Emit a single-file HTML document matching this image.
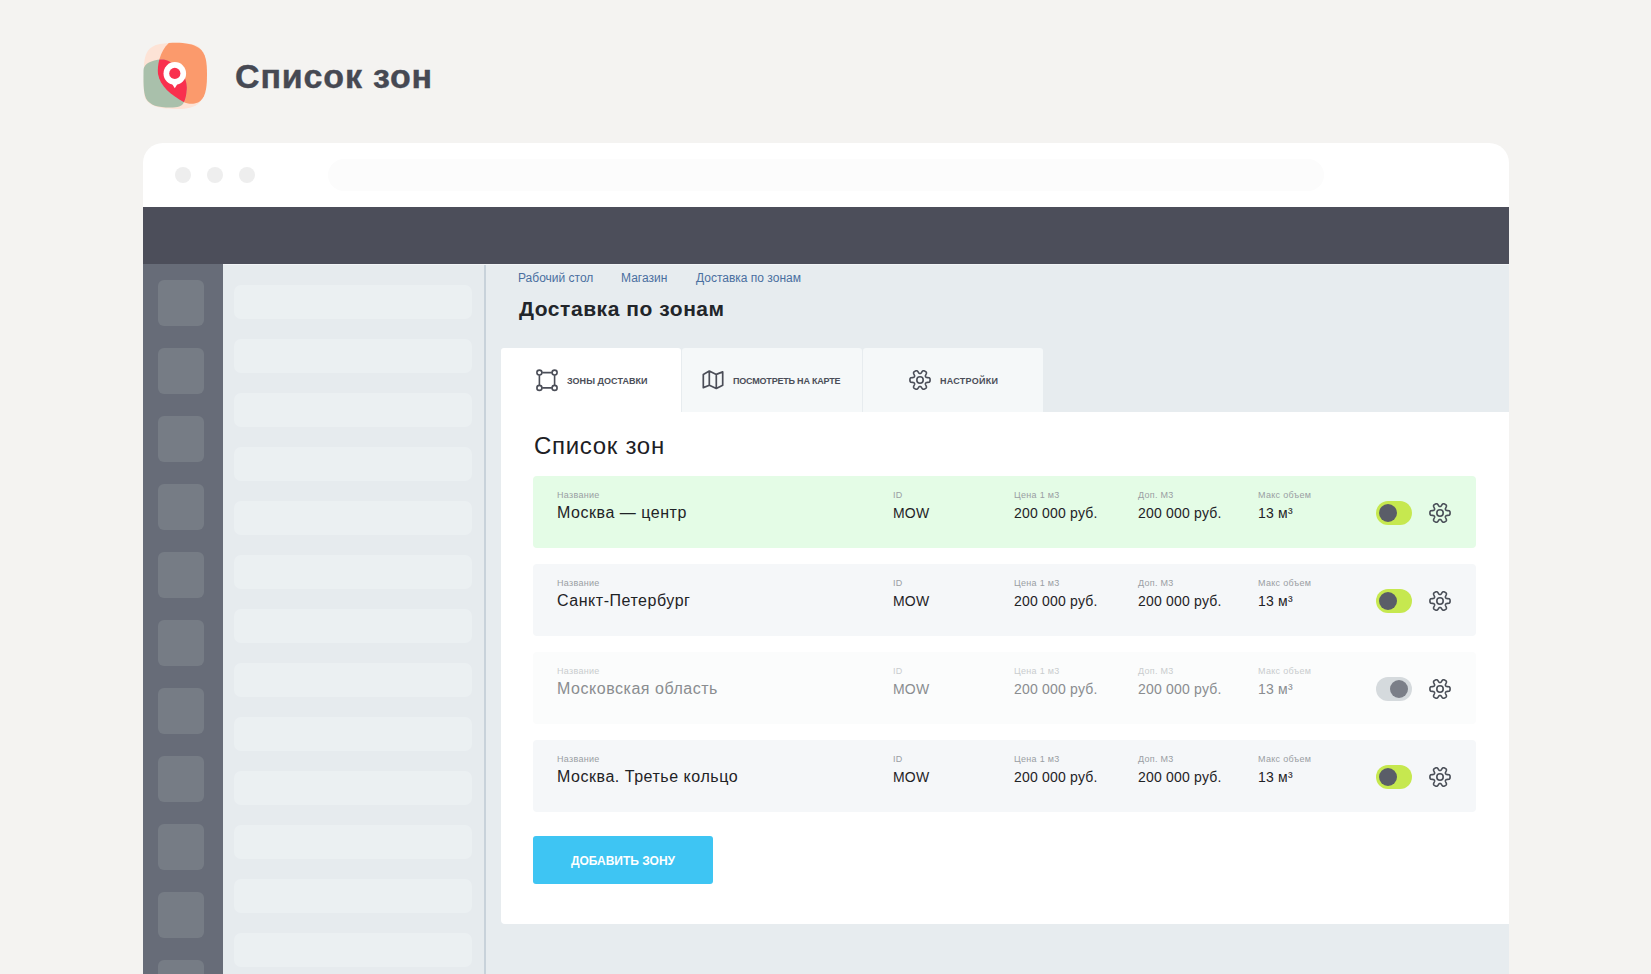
<!DOCTYPE html>
<html><head><meta charset="utf-8">
<style>
*{box-sizing:border-box;margin:0;padding:0}
html,body{width:1651px;height:974px;overflow:hidden;background:#f4f3f1;font-family:"Liberation Sans",sans-serif}
.abs{position:absolute}
#title{position:absolute;left:235px;top:57px;font-size:34px;font-weight:bold;color:#464953;white-space:nowrap;letter-spacing:0.85px;-webkit-text-stroke:0.4px #464953}
#win{position:absolute;left:143px;top:143px;width:1366px;height:900px;background:#fff;border-radius:20px 20px 0 0;overflow:hidden}
.dot{position:absolute;top:24px;width:16px;height:16px;border-radius:50%;background:#eeeeee}
#addr{position:absolute;left:185px;top:16px;width:996px;height:32px;border-radius:16px;background:#fcfcfc}
#hdr{position:absolute;left:0;top:64px;width:1366px;height:57px;background:#4c4e5a}
#side{position:absolute;left:0;top:121px;width:80px;height:800px;background:#676c78}
.sq{position:absolute;left:15px;width:46px;height:46px;border-radius:6px;background:#767c85}
#panel{position:absolute;left:80px;top:121px;width:263px;height:800px;background:#e6ebee;border-right:2px solid #c8d2da;z-index:2}
.ph{position:absolute;left:11px;width:238px;height:34px;border-radius:7px;background:#ebf0f2}
#main{position:absolute;left:342px;top:121px;width:1024px;height:800px;background:#e7ecef}
.bc{position:absolute;top:7px;font-size:12px;color:#4a6fa0;white-space:nowrap}
#h1{position:absolute;left:34px;top:33px;font-size:21px;letter-spacing:0.55px;font-weight:bold;color:#22252a;white-space:nowrap}
.tab{position:absolute;top:84px;width:180px;height:64px;background:#f5f8f9;border-radius:3px 3px 0 0}
.tab.act{background:#fff}
.tab span{position:absolute;font-size:9px;font-weight:bold;color:#4b4e58;white-space:nowrap;top:28px}
.tab svg{position:absolute}
#card{position:absolute;left:16px;top:148px;width:1008px;height:512px;background:#fff;border-radius:0 0 0 4px}
#h2{position:absolute;left:33px;top:20px;font-size:24px;letter-spacing:0.7px;color:#1d2024;white-space:nowrap}
.row{position:absolute;left:32px;width:943px;height:72px;border-radius:4px;background:#f5f7f9}
.row.g{background:#e4fce6}
.row.d{background:#fbfcfc}
.lbl{position:absolute;top:14px;font-size:9px;letter-spacing:0.3px;color:#9a9ea3;white-space:nowrap}
.val{position:absolute;top:29px;font-size:14px;letter-spacing:0.2px;color:#1f2326;white-space:nowrap}
.val.nm{font-size:16px;letter-spacing:0.53px;top:28px}
.row.d .lbl{color:#c9ccce}
.row.d .val{color:#8a8d90}
.tg{position:absolute;left:843px;top:25px;width:36px;height:24px;border-radius:12px;background:#c6e84f}
.tg i{position:absolute;left:3px;top:3px;width:18px;height:18px;border-radius:50%;background:#5a5d68}
.row.d .tg{background:#d5dadd}
.row.d .tg i{left:14px;background:#7b7f88}
.gr{position:absolute;left:895px;top:25px;width:24px;height:24px}
#btn{position:absolute;left:32px;top:424px;width:180px;height:48px;border-radius:3px;background:#3ec5f3;color:#fff;font-size:12px;font-weight:bold;text-align:center;line-height:50px}
</style></head><body>
<svg class="abs" style="left:140px;top:40px" width="72" height="72" viewBox="0 0 72 72">
  <defs><clipPath id="oc"><path id="op" d="M28.8 3 C40 2.2 52 3 59 8 C66 13 67 22 67 35 C67 50 65 59 58 62.5 C52 65 47 63.5 43.6 62 C31 55 20 46 18 34 C17 25 20 11 28.8 3Z"/></clipPath></defs>
  <path d="M4 28 C4 14 8 6 20 4 C35 2 55 2 60 8 C66 16 66 50 60 62 C55 68 45 69 40 69 C25 69 10 68 5 58 C3 50 4 40 4 28Z" fill="#fde3d6"/>
  <path d="M28.8 3 C40 2.2 52 3 59 8 C66 13 67 22 67 35 C67 50 65 59 58 62.5 C52 65 47 63.5 43.6 62 C31 55 20 46 18 34 C17 25 20 11 28.8 3Z" fill="#fb9a6c"/>
  <path id="gp" d="M3.5 31 C3.5 25 8 21.5 17.7 19.8 C23 19 26 19.6 29 21.2 C40 27 47.5 38 46.8 49 C46.4 55 45.5 59 43.8 62.5 C42 66.5 38 67.5 30 67.5 C18 67.5 10 65.5 6 58.5 C3 52 3.5 40 3.5 31Z" fill="#a9c0ab"/>
  <path d="M3.5 31 C3.5 25 8 21.5 17.7 19.8 C23 19 26 19.6 29 21.2 C40 27 47.5 38 46.8 49 C46.4 55 45.5 59 43.8 62.5 C42 66.5 38 67.5 30 67.5 C18 67.5 10 65.5 6 58.5 C3 52 3.5 40 3.5 31Z" fill="#f9304e" clip-path="url(#oc)"/>
  <circle cx="34.8" cy="33.4" r="11.3" fill="#fff"/>
  <path d="M31.5 43 L34.8 48.2 L38.1 43Z" fill="#fff"/>
  <circle cx="34.8" cy="33.4" r="5.6" fill="#f9304e"/>
</svg>
<div id="title">Список зон</div>
<div id="win">
  <div class="dot" style="left:32px"></div><div class="dot" style="left:64px"></div><div class="dot" style="left:96px"></div>
  <div id="addr"></div>
  <div id="hdr"></div>
  <div style="position:absolute;left:80px;top:121px;width:1286px;height:1px;background:#f1f4f6;z-index:3"></div>
  <div id="side">
    <div class="sq" style="top:16px"></div><div class="sq" style="top:84px"></div><div class="sq" style="top:152px"></div><div class="sq" style="top:220px"></div><div class="sq" style="top:288px"></div><div class="sq" style="top:356px"></div><div class="sq" style="top:424px"></div><div class="sq" style="top:492px"></div><div class="sq" style="top:560px"></div><div class="sq" style="top:628px"></div><div class="sq" style="top:696px"></div>
  </div>
  <div id="panel">
    <div class="ph" style="top:21px"></div><div class="ph" style="top:75px"></div><div class="ph" style="top:129px"></div><div class="ph" style="top:183px"></div><div class="ph" style="top:237px"></div><div class="ph" style="top:291px"></div><div class="ph" style="top:345px"></div><div class="ph" style="top:399px"></div><div class="ph" style="top:453px"></div><div class="ph" style="top:507px"></div><div class="ph" style="top:561px"></div><div class="ph" style="top:615px"></div><div class="ph" style="top:669px"></div>
  </div>
  <div id="main">
    <div class="bc" style="left:33px">Рабочий стол</div>
    <div class="bc" style="left:136px">Магазин</div>
    <div class="bc" style="left:211px">Доставка по зонам</div>
    <div id="h1">Доставка по зонам</div>
    <div class="tab act" style="left:16px">
      <svg style="left:33px;top:19px" width="26" height="26" viewBox="0 0 26 26" fill="none" stroke="#4b4e58" stroke-width="1.6"><path d="M8.2 5.6H17.9M8.2 20.9H17.9M5.4 8.4V18.1M20.6 8.4V18.1"/><circle cx="5.4" cy="5.6" r="2.5"/><circle cx="20.6" cy="5.6" r="2.5"/><circle cx="5.4" cy="20.9" r="2.5"/><circle cx="20.6" cy="20.9" r="2.5"/></svg>
      <span style="left:66px;letter-spacing:0.05px">ЗОНЫ ДОСТАВКИ</span>
    </div>
    <div class="tab" style="left:197px">
      <svg style="left:19px;top:21px" width="26" height="24" viewBox="0 0 26 24" fill="none" stroke="#4b4e58" stroke-width="1.7" stroke-linejoin="round" stroke-linecap="round"><path d="M2.3 5.4 L8.3 2.1 L15.3 5.4 L21.7 2.9 V16.2 L15.3 19.5 L8.4 16.3 L2.3 18.6 Z M8.3 2.1 V16.3 M15.3 5.4 V19.5"/></svg>
      <span style="left:51px;letter-spacing:-0.2px">ПОСМОТРЕТЬ НА КАРТЕ</span>
    </div>
    <div class="tab" style="left:378px">
      <svg style="left:45px;top:20px" width="24" height="24" viewBox="0 0 24 24" fill="none" stroke="#4b4e58" stroke-width="1.6"><path d="M22.10 12.00 L22.09 12.26 L22.08 12.53 L22.05 12.79 L22.00 13.05 L21.94 13.31 L21.83 13.56 L21.68 13.79 L21.45 14.01 L21.10 14.18 L20.62 14.31 L20.04 14.38 L19.46 14.42 L18.95 14.46 L18.57 14.52 L18.29 14.61 L18.09 14.71 L17.94 14.83 L17.82 14.97 L17.72 15.11 L17.63 15.25 L17.55 15.40 L17.48 15.56 L17.43 15.73 L17.40 15.92 L17.40 16.15 L17.47 16.43 L17.61 16.79 L17.83 17.25 L18.09 17.78 L18.31 18.31 L18.44 18.79 L18.46 19.18 L18.39 19.49 L18.27 19.74 L18.10 19.95 L17.91 20.14 L17.71 20.31 L17.50 20.46 L17.28 20.61 L17.05 20.75 L16.82 20.87 L16.58 20.99 L16.34 21.10 L16.09 21.19 L15.84 21.26 L15.57 21.30 L15.29 21.28 L14.98 21.19 L14.66 20.97 L14.31 20.62 L13.96 20.16 L13.63 19.67 L13.34 19.25 L13.10 18.95 L12.89 18.75 L12.70 18.63 L12.52 18.56 L12.34 18.52 L12.17 18.51 L12.00 18.50 L11.83 18.51 L11.66 18.52 L11.48 18.56 L11.30 18.63 L11.11 18.75 L10.90 18.95 L10.66 19.25 L10.37 19.67 L10.04 20.16 L9.69 20.62 L9.34 20.97 L9.02 21.19 L8.71 21.28 L8.43 21.30 L8.16 21.26 L7.91 21.19 L7.66 21.10 L7.42 20.99 L7.18 20.87 L6.95 20.75 L6.72 20.61 L6.50 20.46 L6.29 20.31 L6.09 20.14 L5.90 19.95 L5.73 19.74 L5.61 19.49 L5.54 19.18 L5.56 18.79 L5.69 18.31 L5.91 17.78 L6.17 17.25 L6.39 16.79 L6.53 16.43 L6.60 16.15 L6.60 15.92 L6.57 15.73 L6.52 15.56 L6.45 15.40 L6.37 15.25 L6.28 15.11 L6.18 14.97 L6.06 14.83 L5.91 14.71 L5.71 14.61 L5.43 14.52 L5.05 14.46 L4.54 14.42 L3.96 14.38 L3.38 14.31 L2.90 14.18 L2.55 14.01 L2.32 13.79 L2.17 13.56 L2.06 13.31 L2.00 13.05 L1.95 12.79 L1.92 12.53 L1.91 12.26 L1.90 12.00 L1.91 11.74 L1.92 11.47 L1.95 11.21 L2.00 10.95 L2.06 10.69 L2.17 10.44 L2.32 10.21 L2.55 9.99 L2.90 9.82 L3.38 9.69 L3.96 9.62 L4.54 9.58 L5.05 9.54 L5.43 9.48 L5.71 9.39 L5.91 9.29 L6.06 9.17 L6.18 9.03 L6.28 8.89 L6.37 8.75 L6.45 8.60 L6.52 8.44 L6.57 8.27 L6.60 8.08 L6.60 7.85 L6.53 7.57 L6.39 7.21 L6.17 6.75 L5.91 6.22 L5.69 5.69 L5.56 5.21 L5.54 4.82 L5.61 4.51 L5.73 4.26 L5.90 4.05 L6.09 3.86 L6.29 3.69 L6.50 3.54 L6.72 3.39 L6.95 3.25 L7.18 3.13 L7.42 3.01 L7.66 2.90 L7.91 2.81 L8.16 2.74 L8.43 2.70 L8.71 2.72 L9.02 2.81 L9.34 3.03 L9.69 3.38 L10.04 3.84 L10.37 4.33 L10.66 4.75 L10.90 5.05 L11.11 5.25 L11.30 5.37 L11.48 5.44 L11.66 5.48 L11.83 5.49 L12.00 5.50 L12.17 5.49 L12.34 5.48 L12.52 5.44 L12.70 5.37 L12.89 5.25 L13.10 5.05 L13.34 4.75 L13.63 4.33 L13.96 3.84 L14.31 3.38 L14.66 3.03 L14.98 2.81 L15.29 2.72 L15.57 2.70 L15.84 2.74 L16.09 2.81 L16.34 2.90 L16.58 3.01 L16.82 3.13 L17.05 3.25 L17.28 3.39 L17.50 3.54 L17.71 3.69 L17.91 3.86 L18.10 4.05 L18.27 4.26 L18.39 4.51 L18.46 4.82 L18.44 5.21 L18.31 5.69 L18.09 6.22 L17.83 6.75 L17.61 7.21 L17.47 7.57 L17.40 7.85 L17.40 8.08 L17.43 8.27 L17.48 8.44 L17.55 8.60 L17.63 8.75 L17.72 8.89 L17.82 9.03 L17.94 9.17 L18.09 9.29 L18.29 9.39 L18.57 9.48 L18.95 9.54 L19.46 9.58 L20.04 9.62 L20.62 9.69 L21.10 9.82 L21.45 9.99 L21.68 10.21 L21.83 10.44 L21.94 10.69 L22.00 10.95 L22.05 11.21 L22.08 11.47 L22.09 11.74Z"/><circle cx="12" cy="12" r="3.2"/></svg>
      <span style="left:77px;letter-spacing:0.25px">НАСТРОЙКИ</span>
    </div>
    <div id="card">
      <div id="h2">Список зон</div>
      <div class="row g" style="top:64px">
        <div class="lbl" style="left:24px">Название</div><div class="val nm" style="left:24px">Москва — центр</div>
        <div class="lbl" style="left:360px">ID</div><div class="val" style="left:360px">MOW</div>
        <div class="lbl" style="left:481px">Цена 1 м3</div><div class="val" style="left:481px">200 000 руб.</div>
        <div class="lbl" style="left:605px">Доп. М3</div><div class="val" style="left:605px">200 000 руб.</div>
        <div class="lbl" style="left:725px">Макс объем</div><div class="val" style="left:725px">13 м³</div>
        <div class="tg"><i></i></div>
        <svg class="gr" viewBox="0 0 24 24" fill="none" stroke="#4a4f58" stroke-width="1.6"><path d="M22.10 12.00 L22.09 12.26 L22.08 12.53 L22.05 12.79 L22.00 13.05 L21.94 13.31 L21.83 13.56 L21.68 13.79 L21.45 14.01 L21.10 14.18 L20.62 14.31 L20.04 14.38 L19.46 14.42 L18.95 14.46 L18.57 14.52 L18.29 14.61 L18.09 14.71 L17.94 14.83 L17.82 14.97 L17.72 15.11 L17.63 15.25 L17.55 15.40 L17.48 15.56 L17.43 15.73 L17.40 15.92 L17.40 16.15 L17.47 16.43 L17.61 16.79 L17.83 17.25 L18.09 17.78 L18.31 18.31 L18.44 18.79 L18.46 19.18 L18.39 19.49 L18.27 19.74 L18.10 19.95 L17.91 20.14 L17.71 20.31 L17.50 20.46 L17.28 20.61 L17.05 20.75 L16.82 20.87 L16.58 20.99 L16.34 21.10 L16.09 21.19 L15.84 21.26 L15.57 21.30 L15.29 21.28 L14.98 21.19 L14.66 20.97 L14.31 20.62 L13.96 20.16 L13.63 19.67 L13.34 19.25 L13.10 18.95 L12.89 18.75 L12.70 18.63 L12.52 18.56 L12.34 18.52 L12.17 18.51 L12.00 18.50 L11.83 18.51 L11.66 18.52 L11.48 18.56 L11.30 18.63 L11.11 18.75 L10.90 18.95 L10.66 19.25 L10.37 19.67 L10.04 20.16 L9.69 20.62 L9.34 20.97 L9.02 21.19 L8.71 21.28 L8.43 21.30 L8.16 21.26 L7.91 21.19 L7.66 21.10 L7.42 20.99 L7.18 20.87 L6.95 20.75 L6.72 20.61 L6.50 20.46 L6.29 20.31 L6.09 20.14 L5.90 19.95 L5.73 19.74 L5.61 19.49 L5.54 19.18 L5.56 18.79 L5.69 18.31 L5.91 17.78 L6.17 17.25 L6.39 16.79 L6.53 16.43 L6.60 16.15 L6.60 15.92 L6.57 15.73 L6.52 15.56 L6.45 15.40 L6.37 15.25 L6.28 15.11 L6.18 14.97 L6.06 14.83 L5.91 14.71 L5.71 14.61 L5.43 14.52 L5.05 14.46 L4.54 14.42 L3.96 14.38 L3.38 14.31 L2.90 14.18 L2.55 14.01 L2.32 13.79 L2.17 13.56 L2.06 13.31 L2.00 13.05 L1.95 12.79 L1.92 12.53 L1.91 12.26 L1.90 12.00 L1.91 11.74 L1.92 11.47 L1.95 11.21 L2.00 10.95 L2.06 10.69 L2.17 10.44 L2.32 10.21 L2.55 9.99 L2.90 9.82 L3.38 9.69 L3.96 9.62 L4.54 9.58 L5.05 9.54 L5.43 9.48 L5.71 9.39 L5.91 9.29 L6.06 9.17 L6.18 9.03 L6.28 8.89 L6.37 8.75 L6.45 8.60 L6.52 8.44 L6.57 8.27 L6.60 8.08 L6.60 7.85 L6.53 7.57 L6.39 7.21 L6.17 6.75 L5.91 6.22 L5.69 5.69 L5.56 5.21 L5.54 4.82 L5.61 4.51 L5.73 4.26 L5.90 4.05 L6.09 3.86 L6.29 3.69 L6.50 3.54 L6.72 3.39 L6.95 3.25 L7.18 3.13 L7.42 3.01 L7.66 2.90 L7.91 2.81 L8.16 2.74 L8.43 2.70 L8.71 2.72 L9.02 2.81 L9.34 3.03 L9.69 3.38 L10.04 3.84 L10.37 4.33 L10.66 4.75 L10.90 5.05 L11.11 5.25 L11.30 5.37 L11.48 5.44 L11.66 5.48 L11.83 5.49 L12.00 5.50 L12.17 5.49 L12.34 5.48 L12.52 5.44 L12.70 5.37 L12.89 5.25 L13.10 5.05 L13.34 4.75 L13.63 4.33 L13.96 3.84 L14.31 3.38 L14.66 3.03 L14.98 2.81 L15.29 2.72 L15.57 2.70 L15.84 2.74 L16.09 2.81 L16.34 2.90 L16.58 3.01 L16.82 3.13 L17.05 3.25 L17.28 3.39 L17.50 3.54 L17.71 3.69 L17.91 3.86 L18.10 4.05 L18.27 4.26 L18.39 4.51 L18.46 4.82 L18.44 5.21 L18.31 5.69 L18.09 6.22 L17.83 6.75 L17.61 7.21 L17.47 7.57 L17.40 7.85 L17.40 8.08 L17.43 8.27 L17.48 8.44 L17.55 8.60 L17.63 8.75 L17.72 8.89 L17.82 9.03 L17.94 9.17 L18.09 9.29 L18.29 9.39 L18.57 9.48 L18.95 9.54 L19.46 9.58 L20.04 9.62 L20.62 9.69 L21.10 9.82 L21.45 9.99 L21.68 10.21 L21.83 10.44 L21.94 10.69 L22.00 10.95 L22.05 11.21 L22.08 11.47 L22.09 11.74Z"/><circle cx="12" cy="12" r="3.2"/></svg>
      </div>
      <div class="row" style="top:152px">
        <div class="lbl" style="left:24px">Название</div><div class="val nm" style="left:24px">Санкт-Петербург</div>
        <div class="lbl" style="left:360px">ID</div><div class="val" style="left:360px">MOW</div>
        <div class="lbl" style="left:481px">Цена 1 м3</div><div class="val" style="left:481px">200 000 руб.</div>
        <div class="lbl" style="left:605px">Доп. М3</div><div class="val" style="left:605px">200 000 руб.</div>
        <div class="lbl" style="left:725px">Макс объем</div><div class="val" style="left:725px">13 м³</div>
        <div class="tg"><i></i></div>
        <svg class="gr" viewBox="0 0 24 24" fill="none" stroke="#4a4f58" stroke-width="1.6"><path d="M22.10 12.00 L22.09 12.26 L22.08 12.53 L22.05 12.79 L22.00 13.05 L21.94 13.31 L21.83 13.56 L21.68 13.79 L21.45 14.01 L21.10 14.18 L20.62 14.31 L20.04 14.38 L19.46 14.42 L18.95 14.46 L18.57 14.52 L18.29 14.61 L18.09 14.71 L17.94 14.83 L17.82 14.97 L17.72 15.11 L17.63 15.25 L17.55 15.40 L17.48 15.56 L17.43 15.73 L17.40 15.92 L17.40 16.15 L17.47 16.43 L17.61 16.79 L17.83 17.25 L18.09 17.78 L18.31 18.31 L18.44 18.79 L18.46 19.18 L18.39 19.49 L18.27 19.74 L18.10 19.95 L17.91 20.14 L17.71 20.31 L17.50 20.46 L17.28 20.61 L17.05 20.75 L16.82 20.87 L16.58 20.99 L16.34 21.10 L16.09 21.19 L15.84 21.26 L15.57 21.30 L15.29 21.28 L14.98 21.19 L14.66 20.97 L14.31 20.62 L13.96 20.16 L13.63 19.67 L13.34 19.25 L13.10 18.95 L12.89 18.75 L12.70 18.63 L12.52 18.56 L12.34 18.52 L12.17 18.51 L12.00 18.50 L11.83 18.51 L11.66 18.52 L11.48 18.56 L11.30 18.63 L11.11 18.75 L10.90 18.95 L10.66 19.25 L10.37 19.67 L10.04 20.16 L9.69 20.62 L9.34 20.97 L9.02 21.19 L8.71 21.28 L8.43 21.30 L8.16 21.26 L7.91 21.19 L7.66 21.10 L7.42 20.99 L7.18 20.87 L6.95 20.75 L6.72 20.61 L6.50 20.46 L6.29 20.31 L6.09 20.14 L5.90 19.95 L5.73 19.74 L5.61 19.49 L5.54 19.18 L5.56 18.79 L5.69 18.31 L5.91 17.78 L6.17 17.25 L6.39 16.79 L6.53 16.43 L6.60 16.15 L6.60 15.92 L6.57 15.73 L6.52 15.56 L6.45 15.40 L6.37 15.25 L6.28 15.11 L6.18 14.97 L6.06 14.83 L5.91 14.71 L5.71 14.61 L5.43 14.52 L5.05 14.46 L4.54 14.42 L3.96 14.38 L3.38 14.31 L2.90 14.18 L2.55 14.01 L2.32 13.79 L2.17 13.56 L2.06 13.31 L2.00 13.05 L1.95 12.79 L1.92 12.53 L1.91 12.26 L1.90 12.00 L1.91 11.74 L1.92 11.47 L1.95 11.21 L2.00 10.95 L2.06 10.69 L2.17 10.44 L2.32 10.21 L2.55 9.99 L2.90 9.82 L3.38 9.69 L3.96 9.62 L4.54 9.58 L5.05 9.54 L5.43 9.48 L5.71 9.39 L5.91 9.29 L6.06 9.17 L6.18 9.03 L6.28 8.89 L6.37 8.75 L6.45 8.60 L6.52 8.44 L6.57 8.27 L6.60 8.08 L6.60 7.85 L6.53 7.57 L6.39 7.21 L6.17 6.75 L5.91 6.22 L5.69 5.69 L5.56 5.21 L5.54 4.82 L5.61 4.51 L5.73 4.26 L5.90 4.05 L6.09 3.86 L6.29 3.69 L6.50 3.54 L6.72 3.39 L6.95 3.25 L7.18 3.13 L7.42 3.01 L7.66 2.90 L7.91 2.81 L8.16 2.74 L8.43 2.70 L8.71 2.72 L9.02 2.81 L9.34 3.03 L9.69 3.38 L10.04 3.84 L10.37 4.33 L10.66 4.75 L10.90 5.05 L11.11 5.25 L11.30 5.37 L11.48 5.44 L11.66 5.48 L11.83 5.49 L12.00 5.50 L12.17 5.49 L12.34 5.48 L12.52 5.44 L12.70 5.37 L12.89 5.25 L13.10 5.05 L13.34 4.75 L13.63 4.33 L13.96 3.84 L14.31 3.38 L14.66 3.03 L14.98 2.81 L15.29 2.72 L15.57 2.70 L15.84 2.74 L16.09 2.81 L16.34 2.90 L16.58 3.01 L16.82 3.13 L17.05 3.25 L17.28 3.39 L17.50 3.54 L17.71 3.69 L17.91 3.86 L18.10 4.05 L18.27 4.26 L18.39 4.51 L18.46 4.82 L18.44 5.21 L18.31 5.69 L18.09 6.22 L17.83 6.75 L17.61 7.21 L17.47 7.57 L17.40 7.85 L17.40 8.08 L17.43 8.27 L17.48 8.44 L17.55 8.60 L17.63 8.75 L17.72 8.89 L17.82 9.03 L17.94 9.17 L18.09 9.29 L18.29 9.39 L18.57 9.48 L18.95 9.54 L19.46 9.58 L20.04 9.62 L20.62 9.69 L21.10 9.82 L21.45 9.99 L21.68 10.21 L21.83 10.44 L21.94 10.69 L22.00 10.95 L22.05 11.21 L22.08 11.47 L22.09 11.74Z"/><circle cx="12" cy="12" r="3.2"/></svg>
      </div>
      <div class="row d" style="top:240px">
        <div class="lbl" style="left:24px">Название</div><div class="val nm" style="left:24px">Московская область</div>
        <div class="lbl" style="left:360px">ID</div><div class="val" style="left:360px">MOW</div>
        <div class="lbl" style="left:481px">Цена 1 м3</div><div class="val" style="left:481px">200 000 руб.</div>
        <div class="lbl" style="left:605px">Доп. М3</div><div class="val" style="left:605px">200 000 руб.</div>
        <div class="lbl" style="left:725px">Макс объем</div><div class="val" style="left:725px">13 м³</div>
        <div class="tg"><i></i></div>
        <svg class="gr" viewBox="0 0 24 24" fill="none" stroke="#4a4f58" stroke-width="1.6"><path d="M22.10 12.00 L22.09 12.26 L22.08 12.53 L22.05 12.79 L22.00 13.05 L21.94 13.31 L21.83 13.56 L21.68 13.79 L21.45 14.01 L21.10 14.18 L20.62 14.31 L20.04 14.38 L19.46 14.42 L18.95 14.46 L18.57 14.52 L18.29 14.61 L18.09 14.71 L17.94 14.83 L17.82 14.97 L17.72 15.11 L17.63 15.25 L17.55 15.40 L17.48 15.56 L17.43 15.73 L17.40 15.92 L17.40 16.15 L17.47 16.43 L17.61 16.79 L17.83 17.25 L18.09 17.78 L18.31 18.31 L18.44 18.79 L18.46 19.18 L18.39 19.49 L18.27 19.74 L18.10 19.95 L17.91 20.14 L17.71 20.31 L17.50 20.46 L17.28 20.61 L17.05 20.75 L16.82 20.87 L16.58 20.99 L16.34 21.10 L16.09 21.19 L15.84 21.26 L15.57 21.30 L15.29 21.28 L14.98 21.19 L14.66 20.97 L14.31 20.62 L13.96 20.16 L13.63 19.67 L13.34 19.25 L13.10 18.95 L12.89 18.75 L12.70 18.63 L12.52 18.56 L12.34 18.52 L12.17 18.51 L12.00 18.50 L11.83 18.51 L11.66 18.52 L11.48 18.56 L11.30 18.63 L11.11 18.75 L10.90 18.95 L10.66 19.25 L10.37 19.67 L10.04 20.16 L9.69 20.62 L9.34 20.97 L9.02 21.19 L8.71 21.28 L8.43 21.30 L8.16 21.26 L7.91 21.19 L7.66 21.10 L7.42 20.99 L7.18 20.87 L6.95 20.75 L6.72 20.61 L6.50 20.46 L6.29 20.31 L6.09 20.14 L5.90 19.95 L5.73 19.74 L5.61 19.49 L5.54 19.18 L5.56 18.79 L5.69 18.31 L5.91 17.78 L6.17 17.25 L6.39 16.79 L6.53 16.43 L6.60 16.15 L6.60 15.92 L6.57 15.73 L6.52 15.56 L6.45 15.40 L6.37 15.25 L6.28 15.11 L6.18 14.97 L6.06 14.83 L5.91 14.71 L5.71 14.61 L5.43 14.52 L5.05 14.46 L4.54 14.42 L3.96 14.38 L3.38 14.31 L2.90 14.18 L2.55 14.01 L2.32 13.79 L2.17 13.56 L2.06 13.31 L2.00 13.05 L1.95 12.79 L1.92 12.53 L1.91 12.26 L1.90 12.00 L1.91 11.74 L1.92 11.47 L1.95 11.21 L2.00 10.95 L2.06 10.69 L2.17 10.44 L2.32 10.21 L2.55 9.99 L2.90 9.82 L3.38 9.69 L3.96 9.62 L4.54 9.58 L5.05 9.54 L5.43 9.48 L5.71 9.39 L5.91 9.29 L6.06 9.17 L6.18 9.03 L6.28 8.89 L6.37 8.75 L6.45 8.60 L6.52 8.44 L6.57 8.27 L6.60 8.08 L6.60 7.85 L6.53 7.57 L6.39 7.21 L6.17 6.75 L5.91 6.22 L5.69 5.69 L5.56 5.21 L5.54 4.82 L5.61 4.51 L5.73 4.26 L5.90 4.05 L6.09 3.86 L6.29 3.69 L6.50 3.54 L6.72 3.39 L6.95 3.25 L7.18 3.13 L7.42 3.01 L7.66 2.90 L7.91 2.81 L8.16 2.74 L8.43 2.70 L8.71 2.72 L9.02 2.81 L9.34 3.03 L9.69 3.38 L10.04 3.84 L10.37 4.33 L10.66 4.75 L10.90 5.05 L11.11 5.25 L11.30 5.37 L11.48 5.44 L11.66 5.48 L11.83 5.49 L12.00 5.50 L12.17 5.49 L12.34 5.48 L12.52 5.44 L12.70 5.37 L12.89 5.25 L13.10 5.05 L13.34 4.75 L13.63 4.33 L13.96 3.84 L14.31 3.38 L14.66 3.03 L14.98 2.81 L15.29 2.72 L15.57 2.70 L15.84 2.74 L16.09 2.81 L16.34 2.90 L16.58 3.01 L16.82 3.13 L17.05 3.25 L17.28 3.39 L17.50 3.54 L17.71 3.69 L17.91 3.86 L18.10 4.05 L18.27 4.26 L18.39 4.51 L18.46 4.82 L18.44 5.21 L18.31 5.69 L18.09 6.22 L17.83 6.75 L17.61 7.21 L17.47 7.57 L17.40 7.85 L17.40 8.08 L17.43 8.27 L17.48 8.44 L17.55 8.60 L17.63 8.75 L17.72 8.89 L17.82 9.03 L17.94 9.17 L18.09 9.29 L18.29 9.39 L18.57 9.48 L18.95 9.54 L19.46 9.58 L20.04 9.62 L20.62 9.69 L21.10 9.82 L21.45 9.99 L21.68 10.21 L21.83 10.44 L21.94 10.69 L22.00 10.95 L22.05 11.21 L22.08 11.47 L22.09 11.74Z"/><circle cx="12" cy="12" r="3.2"/></svg>
      </div>
      <div class="row" style="top:328px">
        <div class="lbl" style="left:24px">Название</div><div class="val nm" style="left:24px">Москва. Третье кольцо</div>
        <div class="lbl" style="left:360px">ID</div><div class="val" style="left:360px">MOW</div>
        <div class="lbl" style="left:481px">Цена 1 м3</div><div class="val" style="left:481px">200 000 руб.</div>
        <div class="lbl" style="left:605px">Доп. М3</div><div class="val" style="left:605px">200 000 руб.</div>
        <div class="lbl" style="left:725px">Макс объем</div><div class="val" style="left:725px">13 м³</div>
        <div class="tg"><i></i></div>
        <svg class="gr" viewBox="0 0 24 24" fill="none" stroke="#4a4f58" stroke-width="1.6"><path d="M22.10 12.00 L22.09 12.26 L22.08 12.53 L22.05 12.79 L22.00 13.05 L21.94 13.31 L21.83 13.56 L21.68 13.79 L21.45 14.01 L21.10 14.18 L20.62 14.31 L20.04 14.38 L19.46 14.42 L18.95 14.46 L18.57 14.52 L18.29 14.61 L18.09 14.71 L17.94 14.83 L17.82 14.97 L17.72 15.11 L17.63 15.25 L17.55 15.40 L17.48 15.56 L17.43 15.73 L17.40 15.92 L17.40 16.15 L17.47 16.43 L17.61 16.79 L17.83 17.25 L18.09 17.78 L18.31 18.31 L18.44 18.79 L18.46 19.18 L18.39 19.49 L18.27 19.74 L18.10 19.95 L17.91 20.14 L17.71 20.31 L17.50 20.46 L17.28 20.61 L17.05 20.75 L16.82 20.87 L16.58 20.99 L16.34 21.10 L16.09 21.19 L15.84 21.26 L15.57 21.30 L15.29 21.28 L14.98 21.19 L14.66 20.97 L14.31 20.62 L13.96 20.16 L13.63 19.67 L13.34 19.25 L13.10 18.95 L12.89 18.75 L12.70 18.63 L12.52 18.56 L12.34 18.52 L12.17 18.51 L12.00 18.50 L11.83 18.51 L11.66 18.52 L11.48 18.56 L11.30 18.63 L11.11 18.75 L10.90 18.95 L10.66 19.25 L10.37 19.67 L10.04 20.16 L9.69 20.62 L9.34 20.97 L9.02 21.19 L8.71 21.28 L8.43 21.30 L8.16 21.26 L7.91 21.19 L7.66 21.10 L7.42 20.99 L7.18 20.87 L6.95 20.75 L6.72 20.61 L6.50 20.46 L6.29 20.31 L6.09 20.14 L5.90 19.95 L5.73 19.74 L5.61 19.49 L5.54 19.18 L5.56 18.79 L5.69 18.31 L5.91 17.78 L6.17 17.25 L6.39 16.79 L6.53 16.43 L6.60 16.15 L6.60 15.92 L6.57 15.73 L6.52 15.56 L6.45 15.40 L6.37 15.25 L6.28 15.11 L6.18 14.97 L6.06 14.83 L5.91 14.71 L5.71 14.61 L5.43 14.52 L5.05 14.46 L4.54 14.42 L3.96 14.38 L3.38 14.31 L2.90 14.18 L2.55 14.01 L2.32 13.79 L2.17 13.56 L2.06 13.31 L2.00 13.05 L1.95 12.79 L1.92 12.53 L1.91 12.26 L1.90 12.00 L1.91 11.74 L1.92 11.47 L1.95 11.21 L2.00 10.95 L2.06 10.69 L2.17 10.44 L2.32 10.21 L2.55 9.99 L2.90 9.82 L3.38 9.69 L3.96 9.62 L4.54 9.58 L5.05 9.54 L5.43 9.48 L5.71 9.39 L5.91 9.29 L6.06 9.17 L6.18 9.03 L6.28 8.89 L6.37 8.75 L6.45 8.60 L6.52 8.44 L6.57 8.27 L6.60 8.08 L6.60 7.85 L6.53 7.57 L6.39 7.21 L6.17 6.75 L5.91 6.22 L5.69 5.69 L5.56 5.21 L5.54 4.82 L5.61 4.51 L5.73 4.26 L5.90 4.05 L6.09 3.86 L6.29 3.69 L6.50 3.54 L6.72 3.39 L6.95 3.25 L7.18 3.13 L7.42 3.01 L7.66 2.90 L7.91 2.81 L8.16 2.74 L8.43 2.70 L8.71 2.72 L9.02 2.81 L9.34 3.03 L9.69 3.38 L10.04 3.84 L10.37 4.33 L10.66 4.75 L10.90 5.05 L11.11 5.25 L11.30 5.37 L11.48 5.44 L11.66 5.48 L11.83 5.49 L12.00 5.50 L12.17 5.49 L12.34 5.48 L12.52 5.44 L12.70 5.37 L12.89 5.25 L13.10 5.05 L13.34 4.75 L13.63 4.33 L13.96 3.84 L14.31 3.38 L14.66 3.03 L14.98 2.81 L15.29 2.72 L15.57 2.70 L15.84 2.74 L16.09 2.81 L16.34 2.90 L16.58 3.01 L16.82 3.13 L17.05 3.25 L17.28 3.39 L17.50 3.54 L17.71 3.69 L17.91 3.86 L18.10 4.05 L18.27 4.26 L18.39 4.51 L18.46 4.82 L18.44 5.21 L18.31 5.69 L18.09 6.22 L17.83 6.75 L17.61 7.21 L17.47 7.57 L17.40 7.85 L17.40 8.08 L17.43 8.27 L17.48 8.44 L17.55 8.60 L17.63 8.75 L17.72 8.89 L17.82 9.03 L17.94 9.17 L18.09 9.29 L18.29 9.39 L18.57 9.48 L18.95 9.54 L19.46 9.58 L20.04 9.62 L20.62 9.69 L21.10 9.82 L21.45 9.99 L21.68 10.21 L21.83 10.44 L21.94 10.69 L22.00 10.95 L22.05 11.21 L22.08 11.47 L22.09 11.74Z"/><circle cx="12" cy="12" r="3.2"/></svg>
      </div>
      <div id="btn">ДОБАВИТЬ ЗОНУ</div>
    </div>
  </div>
</div>
</body></html>
